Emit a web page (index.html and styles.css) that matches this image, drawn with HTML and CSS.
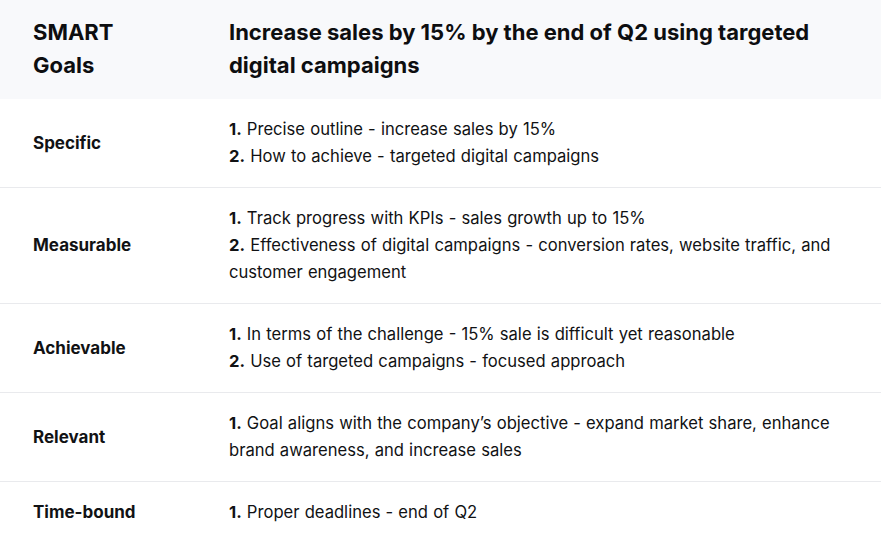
FILE: index.html
```html
<!DOCTYPE html>
<html lang="en">
<head>
<meta charset="utf-8">
<title>SMART Goals</title>
<link rel="stylesheet" href="styles.css">
</head>
<body>
<table class="smart">
  <thead>
    <tr>
      <th class="label-col">SMART<br>Goals</th>
      <th class="text-col">Increase sales by 15% by the end of Q2 using targeted digital campaigns</th>
    </tr>
  </thead>
  <tbody>
    <tr>
      <td class="label">Specific</td>
      <td class="desc"><strong>1.</strong> Precise outline - increase sales by 15%<br><strong>2.</strong> How to achieve - targeted digital campaigns</td>
    </tr>
    <tr>
      <td class="label">Measurable</td>
      <td class="desc"><strong>1.</strong> Track progress with KPIs - sales growth up to 15%<br><strong>2.</strong> Effectiveness of digital campaigns - conversion rates, website traffic, and customer engagement</td>
    </tr>
    <tr>
      <td class="label">Achievable</td>
      <td class="desc"><strong>1.</strong> In terms of the challenge - 15% sale is difficult yet reasonable<br><strong>2.</strong> Use of targeted campaigns - focused approach</td>
    </tr>
    <tr>
      <td class="label">Relevant</td>
      <td class="desc"><strong>1.</strong> Goal aligns with the company’s objective - expand market share, enhance brand awareness, and increase sales</td>
    </tr>
    <tr>
      <td class="label">Time-bound</td>
      <td class="desc"><strong>1.</strong> Proper deadlines - end of Q2</td>
    </tr>
  </tbody>
</table>
</body>
</html>
```
FILE: styles.css
```css
html, body {
  margin: 0;
  padding: 0;
  background: #ffffff;
}

body {
  font-family: "Inter", "Noto Sans", sans-serif;
  color: #111214;
}

.smart {
  width: 881px;
  border-collapse: collapse;
  table-layout: fixed;
}

.smart thead th {
  background: #f8f9fb;
  font-size: 22px;
  font-weight: 700;
  line-height: 33px;
  text-align: left;
  vertical-align: middle;
  padding: 16px 32px 17px 0;
  color: #0d0e10;
}

.smart .label-col {
  width: 163px;
  padding-left: 33px;
}

.smart .text-col {
  padding-left: 1px;
}

.smart tbody td {
  border-bottom: 1px solid #e9eaed;
  vertical-align: middle;
  padding: 17px 32px 17px 0;
}

.smart tbody tr:last-child td {
  border-bottom: none;
}

.smart .label {
  padding-left: 33px;
  font-size: 17px;
  font-weight: 700;
  line-height: 27px;
}

.smart .desc {
  padding-left: 1px;
  font-size: 16.6px;
  font-weight: 400;
  line-height: 27px;
  word-spacing: 0.5px;
}

.smart .desc strong {
  font-weight: 700;
}
```
